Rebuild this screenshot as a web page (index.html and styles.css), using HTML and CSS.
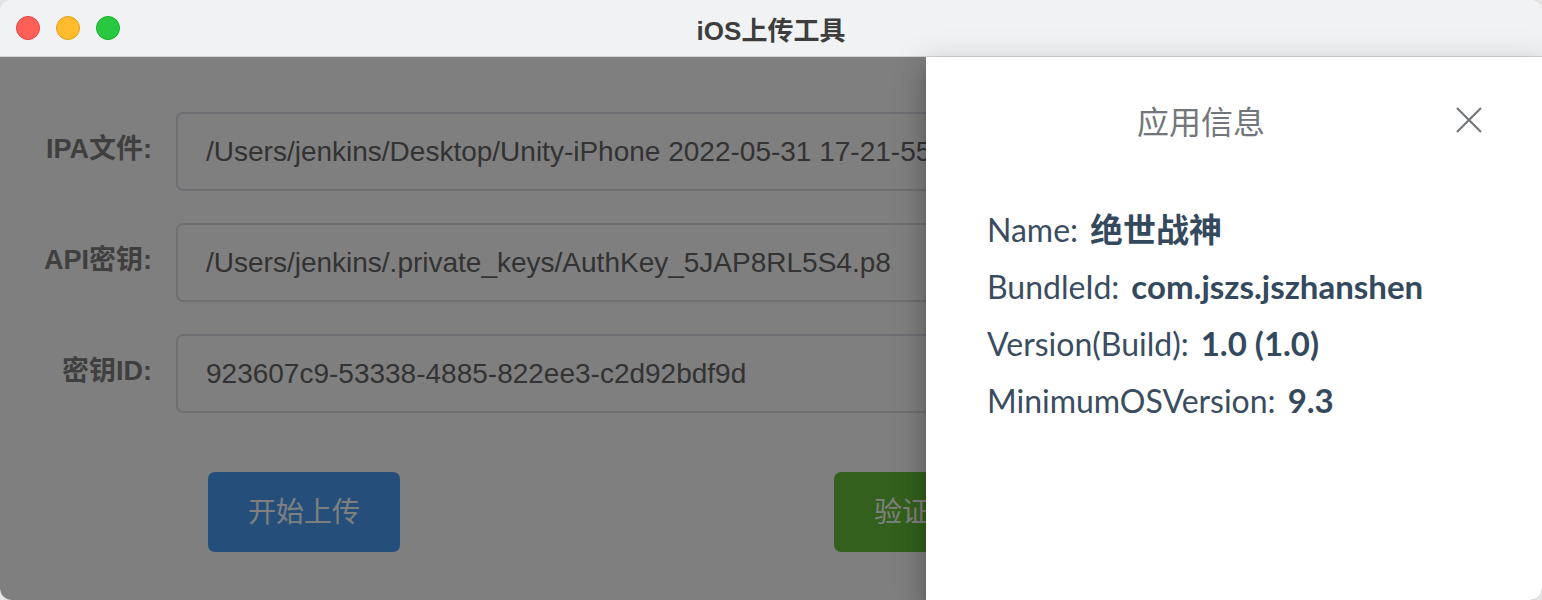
FILE: index.html
```html
<!DOCTYPE html>
<html lang="zh">
<head>
<meta charset="utf-8">
<title>iOS上传工具</title>
<link rel="stylesheet" href="styles.css">
</head>
<body>
<div class="window">
  <div class="titlebar">
    <div class="lights">
      <span class="light red"></span>
      <span class="light yellow"></span>
      <span class="light green"></span>
    </div>
    <div class="title">iOS上传工具</div>
  </div>
  <div class="content">
    <div class="form">
      <div class="row">
        <label class="label">IPA文件:</label>
        <div class="input">/Users/jenkins/Desktop/Unity-iPhone 2022-05-31 17-21-55/Unity-iPhone.ipa</div>
      </div>
      <div class="row">
        <label class="label">API密钥:</label>
        <div class="input">/Users/jenkins/.private_keys/AuthKey_5JAP8RL5S4.p8</div>
      </div>
      <div class="row">
        <label class="label">密钥ID:</label>
        <div class="input">923607c9-53338-4885-822ee3-c2d92bdf9d</div>
      </div>
      <div class="actions">
        <button class="btn blue">开始上传</button>
        <button class="btn green">验证上传</button>
      </div>
    </div>
    <div class="overlay"></div>
    <div class="drawer">
      <div class="drawer-header">
        <div class="drawer-title">应用信息</div>
        <button class="close" aria-label="close">
          <svg width="26" height="26" viewBox="0 0 26 26"><path d="M1 1 L25 25 M25 1 L1 25" stroke="#72767b" stroke-width="2.2" fill="none"/></svg>
        </button>
      </div>
      <div class="info">
        <div class="line"><span class="k">Name:</span><span class="v">绝世战神</span></div>
        <div class="line"><span class="k">BundleId:</span><span class="v">com.jszs.jszhanshen</span></div>
        <div class="line"><span class="k">Version(Build):</span><span class="v">1.0 (1.0)</span></div>
        <div class="line"><span class="k">MinimumOSVersion:</span><span class="v">9.3</span></div>
      </div>
    </div>
  </div>
</div>
</body>
</html>
```

FILE: styles.css
```css
* { box-sizing: border-box; }
html, body { margin: 0; padding: 0; }
body {
  background: #e4e4e4;
  width: 1542px;
  height: 600px;
  overflow: hidden;
}
.window {
  width: 1542px;
  height: 600px;
  border-radius: 12px;
  overflow: hidden;
  background: #ffffff;
  display: flex;
  flex-direction: column;
}
.titlebar {
  height: 57px;
  flex: none;
  background: #f1f2f4;
  border-bottom: 1px solid #d4d4d6;
  display: flex;
  align-items: center;
  position: relative;
}
.lights {
  display: flex;
  gap: 16px;
  padding-left: 16px;
}
.light {
  width: 24px;
  height: 24px;
  border-radius: 50%;
  display: block;
}
.red { background: #fe5f57; border: 1px solid #e2463f; }
.yellow { background: #febc2e; border: 1px solid #e1a116; }
.green { background: #28c840; border: 1px solid #14ae2a; }
.title {
  position: absolute;
  left: 0; right: 0; top: 0; bottom: 0;
  display: flex;
  align-items: center;
  justify-content: center;
  font-family: "Liberation Sans", "Noto Sans CJK SC", sans-serif;
  font-weight: 700;
  font-size: 26px;
  color: #3d3d3d;
}
.content {
  flex: 1;
  position: relative;
  background: #ffffff;
}
.form {
  padding-top: 55px;
  display: flex;
  flex-direction: column;
  gap: 32px;
  font-family: "Liberation Sans", "Noto Sans CJK SC", sans-serif;
}
.row {
  display: flex;
  align-items: center;
  gap: 24px;
}
.label {
  width: 152px;
  text-align: right;
  font-size: 27px;
  font-weight: 700;
  color: #7f7f7f;
  margin-top: -10px;
  white-space: nowrap;
}
.input {
  width: 1330px;
  height: 79px;
  border: 2px solid #dcdfe6;
  border-radius: 7px;
  padding-left: 28px;
  display: flex;
  align-items: center;
  font-size: 28px;
  color: #666666;
  white-space: nowrap;
  overflow: hidden;
}
.actions {
  display: flex;
  gap: 434px;
  padding-left: 208px;
  margin-top: 27px;
}
.btn {
  width: 192px;
  height: 80px;
  border: none;
  border-radius: 7px;
  color: #ffffff;
  font-family: "Noto Sans CJK SC", sans-serif;
  font-size: 28px;
  padding: 0 0 4px 0;
}
.btn.blue { background: #4a9ff5; }
.btn.green { background: #67c23a; }
.overlay {
  position: absolute;
  inset: 0;
  background: rgba(0, 0, 0, 0.5);
}
.drawer {
  position: absolute;
  top: 0; right: 0; bottom: 0;
  width: 616px;
  background: #ffffff;
  box-shadow: 0 8px 10px -5px rgba(0,0,0,.2), 0 16px 24px 2px rgba(0,0,0,.14), 0 6px 30px 5px rgba(0,0,0,.12);
}
.drawer-header {
  display: flex;
  align-items: center;
  padding: 38px 60px 0 32px;
  gap: 12px;
}
.drawer-title {
  flex: 1;
  text-align: center;
  font-family: "Noto Sans CJK SC", sans-serif;
  font-size: 32px;
  line-height: 50px;
  color: #72767b;
}
.close {
  width: 26px;
  height: 26px;
  border: none;
  background: none;
  padding: 0;
  display: block;
}
.close svg { display: block; }
.info {
  padding: 56px 0 0 61px;
  font-family: Lato, "Noto Sans CJK SC", sans-serif;
  font-size: 32px;
  color: #2c3e50;
}
.line {
  height: 57px;
  line-height: 57px;
  white-space: nowrap;
}
.k { font-weight: 400; color: #3a4d60; margin-right: 12px; }
.v { font-weight: 700; color: #34495e; font-size: 33px; }
```
